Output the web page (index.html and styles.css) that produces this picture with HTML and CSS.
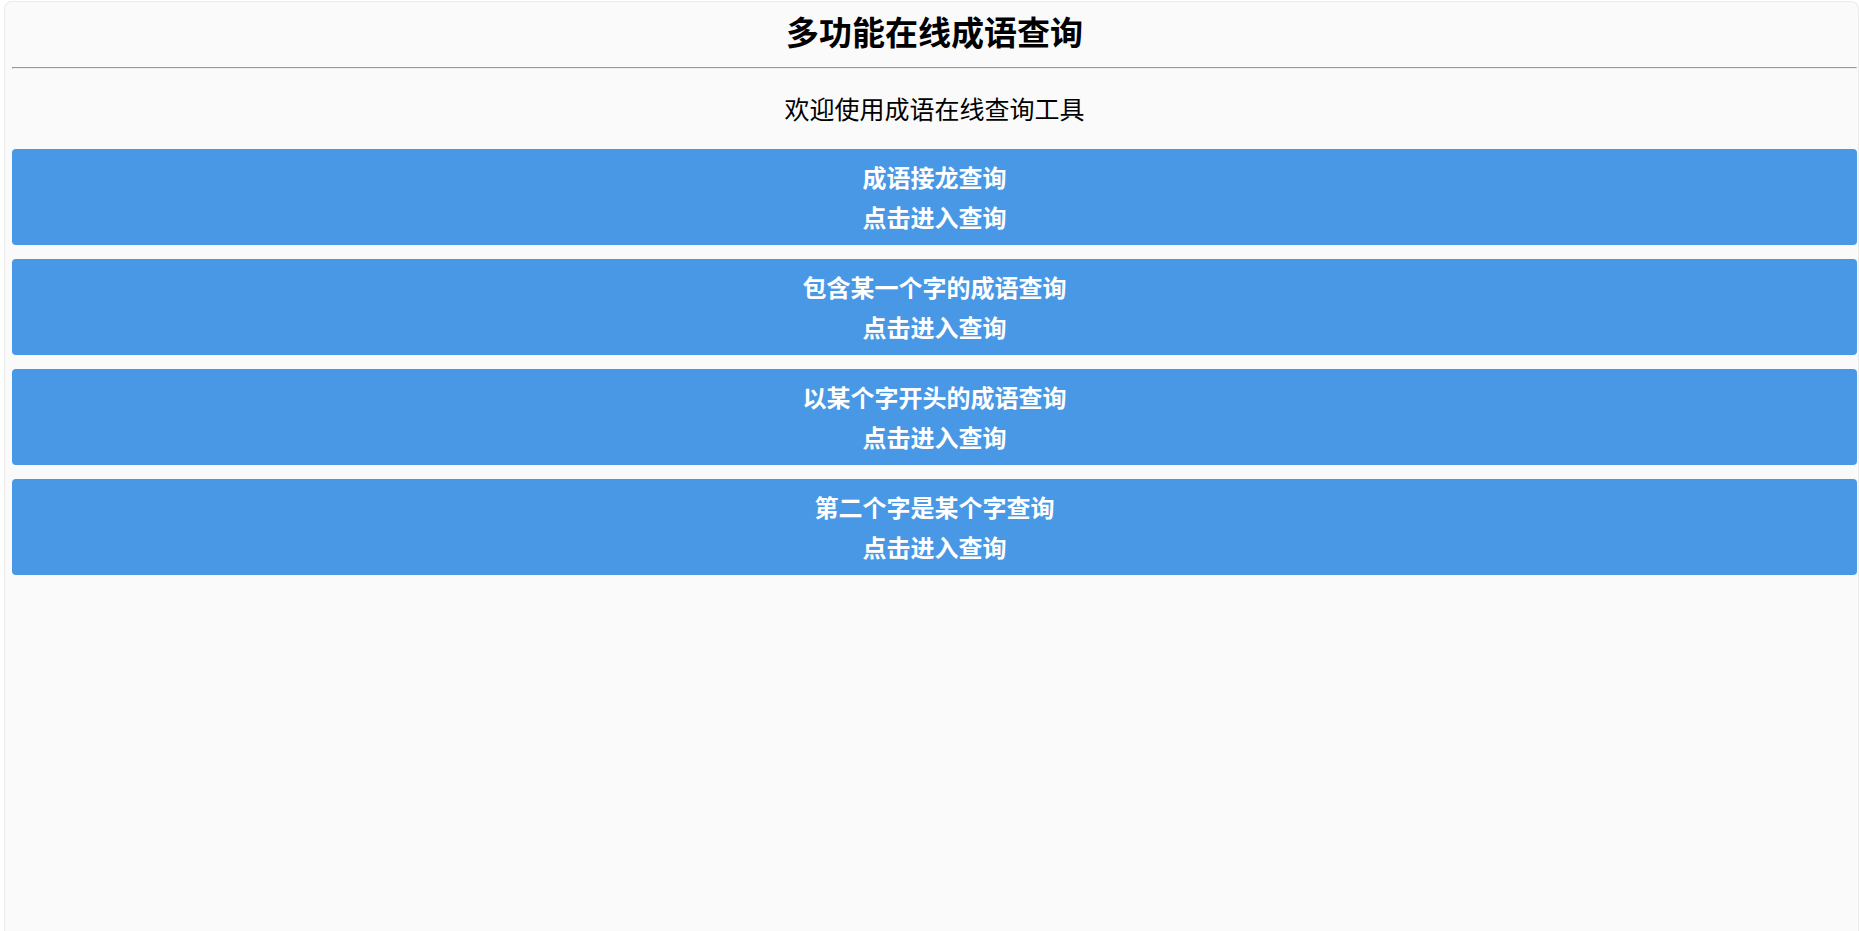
FILE: index.html
```html
<!DOCTYPE html>
<html lang="zh-CN">
<head>
    <meta charset="UTF-8">
    <meta name="viewport" content="width=device-width, initial-scale=1.0">
    <title>多功能在线成语查询</title>
    <link rel="stylesheet" href="styles.css">
</head>
<body>
    <div class="page">
        <h1>多功能在线成语查询</h1>
        <hr>
        <p class="welcome">欢迎使用成语在线查询工具</p>

        <a class="entry" href="#jielong">
            <div>成语接龙查询</div>
            <div>点击进入查询</div>
        </a>
        <a class="entry" href="#contain">
            <div>包含某一个字的成语查询</div>
            <div>点击进入查询</div>
        </a>
        <a class="entry" href="#start">
            <div>以某个字开头的成语查询</div>
            <div>点击进入查询</div>
        </a>
        <a class="entry" href="#second">
            <div>第二个字是某个字查询</div>
            <div>点击进入查询</div>
        </a>
    </div>
</body>
</html>
```

FILE: styles.css
```css
body {
    margin: 0;
    background-color: #fff;
    font-family: "Noto Sans CJK SC", "Noto Sans", sans-serif;
}

.page {
    box-sizing: border-box;
    min-height: calc(100vh - 1px);
    margin: 1px 0 0 4px;
    padding: 0 1px 0 7px;
    border: 1px solid #ebebeb;
    border-bottom: none;
    border-radius: 8px 8px 0 0;
    background-color: #fafafa;
    text-align: center;
}

h1 {
    margin: 0;
    padding-top: 8px;
    font-size: 33px;
    line-height: 42px;
    font-weight: bold;
    color: #000;
}

hr {
    margin: 15px 0 0;
}

.welcome {
    margin: 21px 0 23px;
    font-size: 25px;
    line-height: 36px;
    color: #000;
}

.entry {
    display: block;
    box-sizing: border-box;
    height: 96px;
    margin-bottom: 14px;
    padding: 8px 0;
    border-radius: 4px;
    background-color: #4998e6;
    color: #fff;
    font-size: 24px;
    font-weight: bold;
    line-height: 40px;
    text-decoration: none;
}
```
